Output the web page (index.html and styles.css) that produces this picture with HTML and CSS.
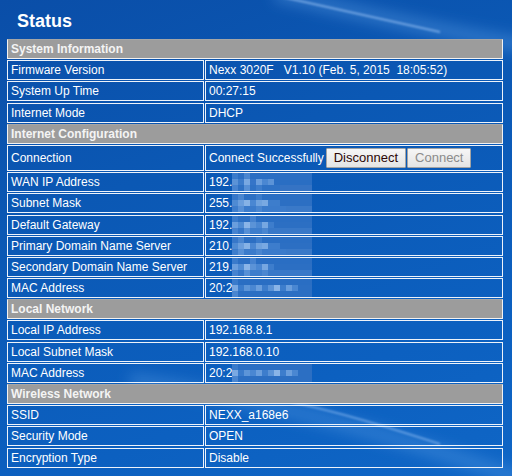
FILE: index.html
```html
<!DOCTYPE html>
<html>
<head>
<meta charset="utf-8">
<title>Status</title>
<link rel="stylesheet" href="styles.css">
</head>
<body>
<div class="page">
  <h1 class="title">Status</h1>
  <div class="grid">
    <div class="sec">System Information</div>
    <div class="cell">Firmware Version</div><div class="cell pre">Nexx 3020F   V1.10 (Feb. 5, 2015  18:05:52)</div>
    <div class="cell">System Up Time</div><div class="cell">00:27:15</div>
    <div class="cell">Internet Mode</div><div class="cell">DHCP</div>

    <div class="sec">Internet Configuration</div>
    <div class="cell tall">Connection</div>
    <div class="cell tall">Connect Successfully<span class="btns"><button class="btn active">Disconnect</button><button class="btn" disabled>Connect</button></span></div>
    <div class="cell">WAN IP Address</div><div class="cell">192.<span class="mz m1"></span></div>
    <div class="cell">Subnet Mask</div><div class="cell">255.<span class="mz m2"></span></div>
    <div class="cell">Default Gateway</div><div class="cell">192.<span class="mz m3"></span></div>
    <div class="cell">Primary Domain Name Server</div><div class="cell">210.<span class="mz m2"></span></div>
    <div class="cell">Secondary Domain Name Server</div><div class="cell">219.<span class="mz m3"></span></div>
    <div class="cell">MAC Address</div><div class="cell">20:2<span class="mz m4"></span></div>

    <div class="sec">Local Network</div>
    <div class="cell">Local IP Address</div><div class="cell">192.168.8.1</div>
    <div class="cell">Local Subnet Mask</div><div class="cell">192.168.0.10</div>
    <div class="cell">MAC Address</div><div class="cell">20:2<span class="mz m4"></span></div>

    <div class="sec">Wireless Network</div>
    <div class="cell">SSID</div><div class="cell">NEXX_a168e6</div>
    <div class="cell">Security Mode</div><div class="cell">OPEN</div>
    <div class="cell">Encryption Type</div><div class="cell">Disable</div>
  </div>
</div>
</body>
</html>
```
FILE: styles.css
```css
html, body {
  margin: 0;
  height: 476px;
  overflow: hidden;
}
body {
  font-family: "Liberation Sans", Arial, sans-serif;
  color: #ffffff;
  background-color: #0b5bb7;
  background-image:
    url("data:image/svg+xml,%3Csvg xmlns='http://www.w3.org/2000/svg' width='512' height='476'%3E%3Cdefs%3E%3Cfilter id='b' x='-20%25' y='-50%25' width='140%25' height='200%25'%3E%3CfeGaussianBlur stdDeviation='1.2'/%3E%3C/filter%3E%3Cfilter id='c' x='-20%25' y='-50%25' width='140%25' height='200%25'%3E%3CfeGaussianBlur stdDeviation='7'/%3E%3C/filter%3E%3C/defs%3E%3Cpath d='M275 -6 C 340 8 430 30 530 46' stroke='%2370aef0' stroke-opacity='0.35' stroke-width='14' fill='none' filter='url(%23c)'/%3E%3Cpath d='M282 -3 C 330 8 385 20 440 32' stroke='%23b0d4ff' stroke-opacity='0.7' stroke-width='1.6' fill='none' filter='url(%23b)'/%3E%3Cpath d='M130 380 C 240 395 380 430 530 482' stroke='%2370aef0' stroke-opacity='0.3' stroke-width='14' fill='none' filter='url(%23c)'/%3E%3Cpath d='M290 402 C 340 412 390 428 440 444' stroke='%23b0d4ff' stroke-opacity='0.6' stroke-width='1.6' fill='none' filter='url(%23b)'/%3E%3C/svg%3E"),
    linear-gradient(160deg, #0a4ea8 0%, #0b58b4 35%, #0c60c0 75%, #0f66c6 100%);
  background-repeat: no-repeat;
  background-size: 512px 476px, 100% 100%;
}
.page {
  padding: 10px 0 0 7px;
}
.title {
  margin: 0 0 7px 10px;
  font-size: 18px;
  line-height: 22px;
  font-weight: bold;
  color: #ffffff;
}
.grid {
  display: grid;
  width: 496px;
  grid-template-columns: 197px 298px;
  column-gap: 1px;
  row-gap: 1.2px;
}
.sec {
  grid-column: 1 / -1;
  box-sizing: border-box;
  height: 20px;
  background: #9c9c9c;
  border: 1px solid #f2f2f2;
  border-top-color: #a6a6a6;
  padding: 0 3px;
  display: flex;
  align-items: center;
  font-size: 12px;
  font-weight: bold;
  color: #f4f4f4;
}
.cell {
  box-sizing: border-box;
  height: 20px;
  border: 1px solid #eef3fa;
  padding: 0 3px;
  display: flex;
  align-items: center;
  font-size: 12px;
  white-space: nowrap;
}
.cell.tall {
  height: 26px;
}
.pre {
  white-space: pre;
}
.btns {
  display: flex;
  gap: 1px;
  margin-left: 2px;
  padding-top: 1px;
}
.btn {
  box-sizing: border-box;
  height: 20px;
  margin: 0;
  padding: 0 7px;
  font-family: "Liberation Sans", Arial, sans-serif;
  font-size: 13px;
  line-height: 18px;
  border: 1px solid #a4a4a4;
  border-radius: 1px;
  background: linear-gradient(#f6f6f6, #e4e4e4);
  color: #8b8b8b;
}
.btn.active {
  color: #2a0606;
}
.mz {
  display: inline-block;
  width: 80px;
  height: 18px;
  background-color: #2466bb;
  background-repeat: no-repeat;
  background-size: 80px 6px, 80px 6px, 80px 6px;
  background-position: 0 0, 0 6px, 0 12px;
}
.m1 {
  background-image:
    linear-gradient(90deg, #3a7bcb 0 6px, #2c6fc3 6px 12px, #4a86d0 12px 18px, #2a6ec3 18px 80px),
    linear-gradient(90deg, #5b93d7 0 6px, #3c7ccb 6px 12px, #78a8e2 12px 18px, #3575c8 18px 24px, #6a9edd 24px 30px, #4a87d2 30px 36px, #5b93d7 36px 42px, #2a6ec3 42px 80px),
    linear-gradient(90deg, #4683d0 0 6px, #2e71c4 6px 12px, #5790d6 12px 18px, #2f72c5 18px 24px, #3d7dcc 24px 30px, #2f72c5 30px 48px, #3573c4 48px 80px);
}
.m2 {
  background-image:
    linear-gradient(90deg, #3777c9 0 6px, #4a86d0 6px 12px, #2c6fc3 12px 24px, #3a7bcb 24px 30px, #2a6ec3 30px 80px),
    linear-gradient(90deg, #4f8bd3 0 6px, #6a9edd 6px 12px, #86b2e6 12px 18px, #4a87d2 18px 24px, #6fa2de 24px 30px, #79a9e2 30px 36px, #3d7dcc 36px 48px, #2c6fc3 48px 80px),
    linear-gradient(90deg, #3d7dcc 0 6px, #5790d6 6px 12px, #3b7bcb 12px 24px, #4a86d0 24px 30px, #3b7bcb 30px 54px, #3a79c8 54px 80px);
}
.m3 {
  background-image:
    linear-gradient(90deg, #3a7bcb 0 6px, #2c6fc3 6px 18px, #4582cf 18px 24px, #2a6ec3 24px 80px),
    linear-gradient(90deg, #6a9edd 0 6px, #4f8bd3 6px 12px, #8ab4e7 12px 18px, #5b93d7 18px 24px, #4a87d2 24px 30px, #76a7e1 30px 36px, #3d7dcc 36px 42px, #2c6fc3 42px 80px),
    linear-gradient(90deg, #4683d0 0 6px, #3576c8 6px 12px, #5790d6 12px 18px, #3d7dcc 18px 30px, #4a86d0 30px 36px, #3878c8 36px 80px);
}
.m4 {
  background-image:
    linear-gradient(90deg, #3a7bcb 0 6px, #2a6ec3 6px 80px),
    linear-gradient(90deg, #7aa9e2 0 6px, #3a7bcb 6px 12px, #5d95d8 12px 18px, #4a87d2 18px 24px, #6a9edd 24px 30px, #3d7dcc 30px 36px, #5b93d7 36px 42px, #8ab4e7 42px 48px, #3d7dcc 48px 54px, #6a9edd 54px 60px, #4a87d2 60px 66px, #2c6fc3 66px 80px),
    linear-gradient(90deg, #4a86d0 0 6px, #2c6fc3 6px 80px);
}
```
